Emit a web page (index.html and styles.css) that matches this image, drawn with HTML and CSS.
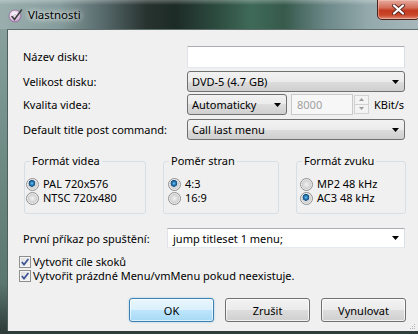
FILE: index.html
```html
<!DOCTYPE html>
<html lang="cs">
<head>
	<meta charset="UTF-8">
	<title>Vlastnosti</title>
	<link rel="stylesheet" href="styles.css">
</head>
<body>
	<div class="window">
		<div class="titlebar">
			<svg class="app-icon" width="15" height="15" viewBox="0 0 15 15">
				<defs>
					<radialGradient id="disc" cx="45%" cy="40%" r="60%">
						<stop offset="0" stop-color="#ffffff"/>
						<stop offset="0.6" stop-color="#ead3ea"/>
						<stop offset="1" stop-color="#b98cc0"/>
					</radialGradient>
				</defs>
				<circle cx="7" cy="8" r="6" fill="url(#disc)" stroke="#8f6f98" stroke-width="0.8"/>
				<circle cx="7" cy="8" r="1.4" fill="#fff" stroke="#a58aae" stroke-width="0.6"/>
				<path d="M4 8.5 L6.5 11.5 L13.5 2" fill="none" stroke="#3c3c3c" stroke-width="1.6" stroke-linecap="round"/>
			</svg>
			<span class="title">Vlastnosti</span>
			<div class="close">
				<svg width="13" height="11" viewBox="0 0 13 11">
					<path d="M2 1.5 L11 9.5 M11 1.5 L2 9.5" stroke="#5a2a22" stroke-width="4" stroke-linecap="round"/>
					<path d="M2 1.5 L11 9.5 M11 1.5 L2 9.5" stroke="#fff" stroke-width="2.2" stroke-linecap="round"/>
				</svg>
			</div>
		</div>

		<div class="client">
			<div class="form">
				<label>Název disku:</label>
				<div class="textbox"></div>

				<label>Velikost disku:</label>
				<div class="combo">DVD-5 (4.7 GB)<svg class="arrow" width="7" height="4" viewBox="0 0 7 4"><path d="M0 0 H7 L3.5 4 Z"/></svg></div>

				<label>Kvalita videa:</label>
				<div class="quality">
					<div class="combo small">Automaticky<svg class="arrow" width="7" height="4" viewBox="0 0 7 4"><path d="M0 0 H7 L3.5 4 Z"/></svg></div>
					<div class="numbox">8000</div>
					<div class="spin">
						<b><svg width="5" height="3" viewBox="0 0 5 3"><path d="M0 3 H5 L2.5 0 Z"/></svg></b>
						<b><svg width="5" height="3" viewBox="0 0 5 3"><path d="M0 0 H5 L2.5 3 Z"/></svg></b>
					</div>
					<span class="unit">KBit/s</span>
				</div>

				<label>Default title post command:</label>
				<div class="combo">Call last menu<svg class="arrow" width="7" height="4" viewBox="0 0 7 4"><path d="M0 0 H7 L3.5 4 Z"/></svg></div>
			</div>

			<div class="groups">
				<fieldset class="group g-video">
					<legend>Formát videa</legend>
					<div class="opts">
						<div class="radio on"><i></i>PAL 720x576</div>
						<div class="radio"><i></i>NTSC 720x480</div>
					</div>
				</fieldset>
				<fieldset class="group g-aspect">
					<legend>Poměr stran</legend>
					<div class="opts">
						<div class="radio on"><i></i>4:3</div>
						<div class="radio"><i></i>16:9</div>
					</div>
				</fieldset>
				<fieldset class="group g-audio">
					<legend>Formát zvuku</legend>
					<div class="opts">
						<div class="radio"><i></i>MP2 48 kHz</div>
						<div class="radio on"><i></i>AC3 48 kHz</div>
					</div>
				</fieldset>
			</div>

			<div class="first-cmd">
				<label>První příkaz po spuštění:</label>
				<div class="editcombo">jump titleset 1 menu;<svg class="arrow" width="7" height="4" viewBox="0 0 7 4"><path d="M0 0 H7 L3.5 4 Z"/></svg></div>
			</div>

			<div class="checks">
				<div class="check"><i><svg width="10" height="10" viewBox="0 0 10 10"><path d="M1.8 5 L4 7.6 L8.4 2" fill="none" stroke="#3d5596" stroke-width="1.7"/></svg></i>Vytvořit cíle skoků</div>
				<div class="check"><i><svg width="10" height="10" viewBox="0 0 10 10"><path d="M1.8 5 L4 7.6 L8.4 2" fill="none" stroke="#3d5596" stroke-width="1.7"/></svg></i>Vytvořit prázdné Menu/vmMenu pokud neexistuje.</div>
			</div>

			<div class="buttons">
				<button class="btn default">OK</button>
				<button class="btn">Zrušit</button>
				<button class="btn">Vynulovat</button>
			</div>

			<svg class="grip" width="7" height="7" viewBox="0 0 7 7" fill="#b4b4b4">
				<rect x="5" y="1" width="1" height="1"/>
				<rect x="3" y="3" width="1" height="1"/><rect x="5" y="3" width="1" height="1"/>
				<rect x="1" y="5" width="1" height="1"/><rect x="3" y="5" width="1" height="1"/><rect x="5" y="5" width="1" height="1"/>
			</svg>
		</div>
	</div>
</body>
</html>
```

FILE: styles.css
```css
*{box-sizing:border-box;}
html,body{margin:0;padding:0;}
body{width:418px;height:334px;overflow:hidden;font-family:"Noto Sans","Open Sans",sans-serif;font-size:11px;color:#000;}

/* okno + ram (aero) */
.window{display:flex;flex-direction:column;width:418px;height:334px;padding:0 0 3px 7px;overflow:hidden;background:linear-gradient(180deg,#8ea5a2 0,#6f8c85 45%,#5b766f 85%,#2f3e3b 99%);}
.titlebar{display:flex;align-items:flex-start;height:29px;margin-left:-7px;padding-left:8px;flex:none;
	background:linear-gradient(180deg,rgba(255,255,255,.28) 0,rgba(255,255,255,0) 5px),
	linear-gradient(90deg,#9aaeae 0,#869c9c 14%,#56686a 25%,#27332f 35%,#1d2b27 42%,#2d4c40 52%,#3f6a58 60%,#365a4c 68%,#6c8888 78%,#93a9ac 88%,#a7b8bb 100%);}
.app-icon{margin-top:8px;flex:none;}
.title{margin:7px 0 0 5px;line-height:16px;font-size:11.5px;text-shadow:0 0 5px #fff,0 0 9px rgba(255,255,255,.8);}
.close{display:flex;align-items:center;justify-content:center;margin-left:auto;margin-right:-2px;width:43px;height:20px;border:1px solid #4a231c;border-top:0;border-radius:0 0 5px 5px;
	background:linear-gradient(180deg,#e6ab9e 0,#d46f5b 40%,#c43b20 55%,#c9472c 80%,#e0907a 100%);box-shadow:inset 0 0 0 1px rgba(255,210,200,.45);}

.client{position:relative;flex:1;background:#f0f0f0;border-left:1px solid #4e5f5c;border-top:1px solid #5d6e6b;padding:16px 0 0 15px;}

/* horni formular */
.form{display:grid;grid-template-columns:164px 218px;grid-template-rows:25px 23px 25px 21px;align-items:start;}
.form label{line-height:21px;height:21px;white-space:nowrap;}
.form label:first-child{line-height:22px;}
.textbox{height:22px;background:#fff;border:1px solid;border-color:#abadb3 #dbdfe6 #e3e9ef #e2e3ea;}
.combo{display:flex;align-items:center;height:21px;padding-left:4px;border:1px solid #707070;border-radius:3px;white-space:nowrap;
	background:linear-gradient(180deg,#f2f2f2 0,#ebebeb 50%,#dddddd 50%,#cfcfcf 100%);}
.arrow{margin-left:auto;margin-right:5px;flex:none;}
.quality{display:flex;align-items:center;height:21px;}
.combo.small{width:100px;}
.numbox{width:62px;height:21px;margin-left:4px;padding-left:5px;line-height:19px;color:#a0a0a0;background:#f7f7f7;border:1px solid #c9c9c9;}
.spin{display:flex;flex-direction:column;width:15px;height:19px;margin-left:1px;}
.spin b{display:flex;align-items:center;justify-content:center;height:50%;border:1px solid #d2d2d2;background:#f3f3f3;fill:#9c9c9c;}
.spin b+b{border-top:0;}
.unit{margin-left:5px;}

/* skupiny */
.groups{display:flex;gap:17px;margin:13px 0 0 1px;}
.group{margin:0;padding:0;min-width:0;border:1px solid #d5dfe5;border-radius:3px;}
.group legend{margin-left:5px;padding:0 2px;line-height:16px;}
.g-video{width:122px;}
.g-aspect{width:116px;}
.g-audio{width:110px;}
.opts{padding:8px 0 8px 1px;}
.g-aspect .opts{padding-left:4px;}
.g-audio .opts{padding-left:3px;}
.radio{display:flex;align-items:center;height:14px;line-height:14px;white-space:nowrap;}
.radio i{width:13px;height:13px;margin-right:4px;border-radius:50%;border:1px solid #8d8f90;
	background:radial-gradient(circle 5.5px at 50% 50%,#f3f3f3 0,#dadada 55%,#d0d0d0 75%,#f6f6f6 100%);}
.radio.on i{background:radial-gradient(circle 3.6px at 45% 40%,#7cc4ec 0,#2a81bd 45%,#0f4b7c 85%,rgba(15,75,124,0) 100%),
	radial-gradient(circle 5.5px at 50% 50%,#f3f3f3 0,#dadada 55%,#d0d0d0 75%,#f6f6f6 100%);}

/* prvni prikaz */
.first-cmd{display:flex;align-items:center;margin-top:14px;}
.first-cmd label{width:144px;white-space:nowrap;}
.editcombo{display:flex;align-items:center;width:238px;height:20px;padding-left:5px;background:#fff;border:1px solid;border-color:#abadb3 #dbdfe6 #e3e9ef #e2e3ea;white-space:nowrap;}

/* zaskrtavatka */
.checks{margin:7px 0 0 -4px;}
.check{display:flex;align-items:center;height:14px;line-height:14px;white-space:nowrap;}
.check i{display:flex;align-items:center;justify-content:center;width:12px;height:12px;margin-right:2px;border:1px solid #8e8f8f;
	background:linear-gradient(135deg,#dcdcdc 0,#f7f7f7 100%);box-shadow:inset 0 0 0 1px #f4f4f4;}

/* tlacitka */
.buttons{display:flex;justify-content:flex-end;gap:11px;margin-top:15px;padding-right:12px;}
.btn{width:85px;height:24px;padding:0;font:inherit;color:#000;border:1px solid #707070;border-radius:3px;
	background:linear-gradient(180deg,#f2f2f2 0,#ebebeb 50%,#dddddd 50%,#cfcfcf 100%);box-shadow:inset 0 0 0 1px rgba(255,255,255,.7);}
.btn.default{border-color:#3c7fb1;background:linear-gradient(180deg,#eaf6fd 0,#d9f0fc 50%,#bee6fd 50%,#a7d9f5 100%);box-shadow:inset 0 0 0 1px rgba(255,255,255,.6),0 0 2px rgba(60,160,230,.5);}

.grip{position:absolute;right:2px;bottom:1px;}
```
